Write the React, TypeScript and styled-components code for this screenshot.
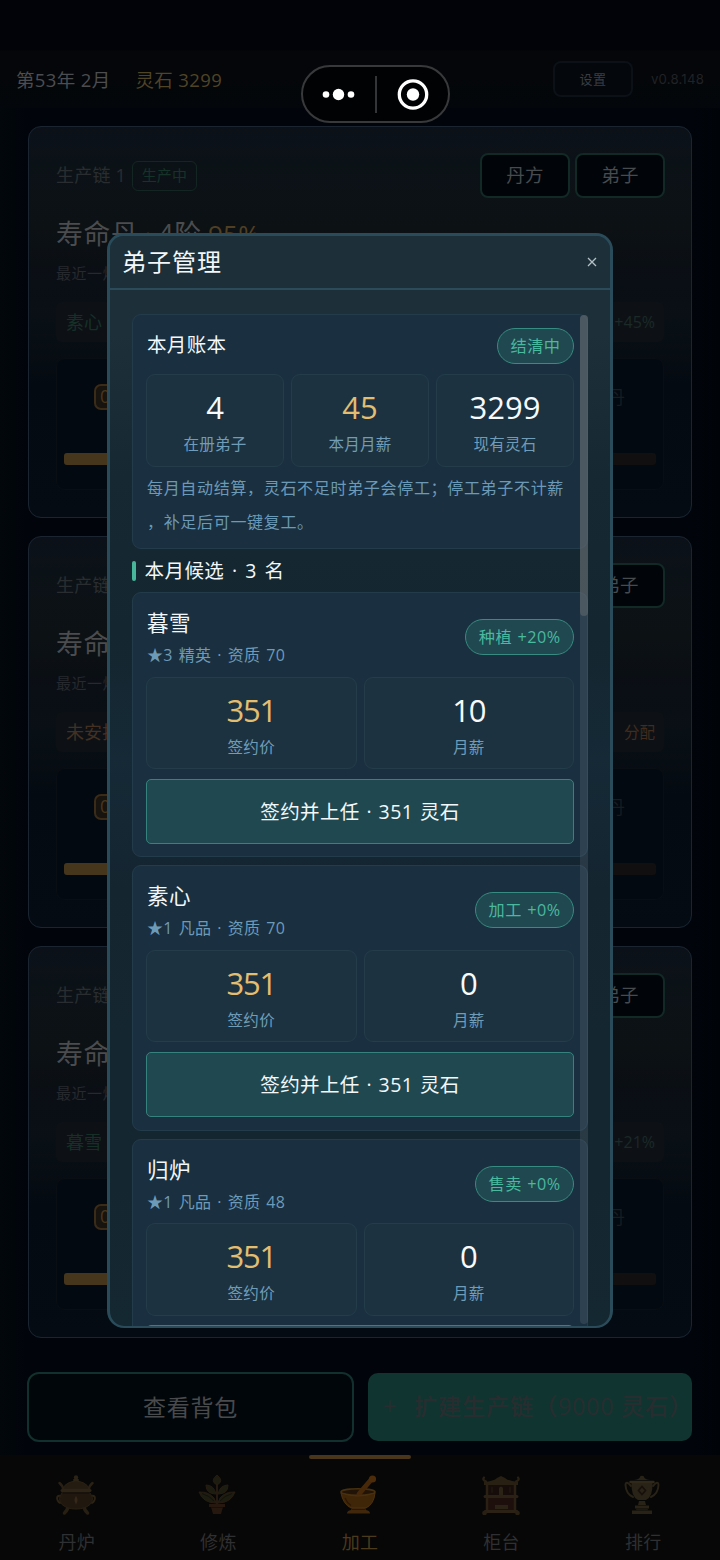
import React from "react";
import styled, { createGlobalStyle } from "styled-components";

const Global = createGlobalStyle`
  * { box-sizing: border-box; }
  html, body { margin: 0; padding: 0; background: #01050a; }
  body { font-family: "Open Sans", "Noto Sans CJK SC", sans-serif; font-weight: 400; }
  button { font: inherit; letter-spacing: inherit; padding: 0; margin: 0; }
`;

const Page = styled.div`
  position: relative;
  width: 720px;
  height: 1560px;
  overflow: hidden;
  display: flex;
  flex-direction: column;
  background: linear-gradient(90deg, #02070b 0, #01050b 28px, #01050b 692px, #000308 100%);
`;

const TopBar = styled.header`
  flex: none;
  height: 108px;
  padding: 51px 16px 0;
  display: flex;
  align-items: center;
  background: linear-gradient(180deg, #020308 0, #020308 50px, #050609 51px, #03060a 108px);
  color: #4b4d50;
  font-size: 18.5px;
  line-height: 57px;
  letter-spacing: 0.35px;
`;

const Stones = styled.span`
  margin-left: 25px;
  color: #4f4426;
`;

const Settings = styled.button`
  margin: -1px 18px 0 auto;
  width: 80px;
  height: 36px;
  border: 2px solid #0c1117;
  border-radius: 8px;
  background: #04070c;
  color: #3a3e44;
  font-size: 13px;
  line-height: 30px;
`;

const Version = styled.span`
  font-family: Inter, sans-serif;
  font-size: 13.2px;
  letter-spacing: 0.2px;
  color: #202225;
`;

const Capsule = styled.div`
  position: absolute;
  left: 301px;
  top: 65px;
  width: 149px;
  height: 58px;
  border: 2px solid #38393b;
  border-radius: 30px;
  background: #010204;
  display: flex;
  align-items: center;
  justify-content: space-between;
  padding: 0 19px 0 19px;
  z-index: 3;
`;

const CapsuleRule = styled.i`
  width: 2px;
  height: 37px;
  margin-left: 0;
  background: #343538;
`;

const Chains = styled.main`
  padding: 17.5px 28px 0;
  display: flex;
  flex-direction: column;
  gap: 18px;
`;

const ChainCard = styled.section`
  height: 392px;
  padding: 26.5px 26px 0 27px;
  border: 1px solid #1a2531;
  border-radius: 13px;
  background: linear-gradient(180deg, #0c1119 0, #0b1217 9%, #0c1114 26%, #0a0e15 40%, #091015 50%, #040a11 66%, #050b13 100%);
`;

const ChainHead = styled.div`
  height: 45px;
  display: flex;
  align-items: center;
  gap: 5px;
  color: #292d30;
  font-size: 18px;
  line-height: 22px;
  letter-spacing: 0.2px;
`;

const ChainName = styled.span`
  margin-top: -2px;
`;

const StateTag = styled.span`
  height: 30px;
  width: 65px;
  margin-left: 1px;
  border: 1px solid #132622;
  border-radius: 6px;
  color: #153329;
  font-size: 15px;
  line-height: 27px;
  text-align: center;
`;

const ChainTools = styled.div`
  margin-left: auto;
  display: flex;
  gap: 5px;
`;

const ChainButton = styled.button`
  width: 90px;
  height: 45px;
  border: 2px solid #122926;
  border-radius: 8px;
  background: #01050a;
  color: #484b4e;
  font-size: 18.5px;
  padding-bottom: 1px;
`;

const ChainTitle = styled.h2`
  margin: 13px 0 0;
  height: 44px;
  line-height: 45px;
  font-size: 26.8px;
  font-weight: 400;
  letter-spacing: 0.7px;
  word-spacing: -1.6px;
  color: #4a4c4e;
  white-space: pre;
`;

const Rate = styled.span`
  font-size: 26px;
  letter-spacing: 0.3px;
  color: #513f23;
`;

const Recent = styled.div`
  height: 22px;
  margin-top: 8px;
  line-height: 21px;
  font-size: 15px;
  letter-spacing: 0.5px;
  color: #26292d;
`;

const WorkerRow = styled.div<{ $idle?: boolean }>`
  height: 40px;
  margin: 17px 1px 0 0;
  padding: 0 9px 1px 10px;
  border-radius: 6px;
  background: #0d1115;
  display: flex;
  justify-content: space-between;
  align-items: center;
  font-size: 18px;
  line-height: 38px;
  color: ${(p) => (p.$idle ? "#443022" : "#163028")};
`;

const Bonus = styled.span<{ $idle?: boolean }>`
  font-size: ${(p) => (p.$idle ? 15.5 : 16)}px;
  color: ${(p) => (p.$idle ? "#432b1d" : "#1b2927")};
`;

const Process = styled.div`
  height: 132px;
  margin: 16px 1px 0 0;
  padding: 22.5px 7px 0;
  border: 1px solid #080e13;
  border-radius: 9px;
  background: #030910;
`;

const ProcessLabels = styled.div`
  height: 30px;
  padding: 0 31px 0 30px;
  display: flex;
  align-items: center;
  justify-content: space-between;
  font-size: 18px;
  line-height: 28px;
  color: #171c20;
`;

const Count = styled.span`
  height: 26px;
  padding: 0 4px;
  border: 2px solid #3b2c17;
  border-radius: 7px;
  background: #17130f;
  color: #49381c;
  line-height: 21px;
`;

const Track = styled.div`
  height: 12px;
  margin-top: 41px;
  border-radius: 3px;
  background: #120f11;
`;

const Fill = styled.div`
  width: 45%;
  height: 100%;
  border-radius: 3px;
  background: #46361c;
`;

const Actions = styled.div`
  padding: 34px 28px 0 27px;
  display: flex;
  gap: 14px;
  height: 103px;
`;

const BagButton = styled.button`
  width: 327px;
  height: 70px;
  border: 2px solid #12302d;
  border-radius: 12px;
  background: #01060b;
  color: #484a4c;
  font-size: 23px;
  letter-spacing: 0.8px;
  padding-bottom: 2px;
`;

const ExpandButton = styled.button`
  flex: 1;
  min-width: 0;
  height: 68px;
  margin-top: 1px;
  padding: 0 0 3px 15px;
  border: 0;
  border-radius: 10px;
  background: #103531;
  color: #282d2f;
  font-size: 23.2px;
  font-weight: 500;
  letter-spacing: 0.8px;
  text-align: left;
  white-space: pre;
  overflow: hidden;
`;

const Plus = styled.span`
  margin-right: 17px;
`;

const Nav = styled.nav`
  margin-top: auto;
  height: 105px;
  display: grid;
  grid-template-columns: repeat(5, 1fr);
  padding: 0 6px;
  background: #070707;
`;

const NavItem = styled.div<{ $on?: boolean }>`
  display: flex;
  flex-direction: column;
  align-items: center;
  color: ${(p) => (p.$on ? "#4b3a1b" : "#2f3031")};
  font-size: 18px;
  line-height: 26px;
  letter-spacing: 0.3px;
  &::before {
    content: "";
    width: 102px;
    height: 4px;
    border-radius: 2px;
    background: ${(p) => (p.$on ? "#493519" : "transparent")};
  }
  svg { margin: 16px 2px 14px 0; display: block; }
`;

const Dialog = styled.div`
  position: absolute;
  left: 107px;
  top: 233px;
  width: 506px;
  height: 1095px;
  border: 3px solid #294b5a;
  border-bottom-width: 2px;
  border-radius: 17px;
  overflow: hidden;
  display: flex;
  flex-direction: column;
  background: linear-gradient(180deg, #1d2f39 0, #1d2f38 9%, #162831 22%, #14262f 36%, #152936 48%, #142530 60%, #142831 100%);
  z-index: 4;
`;

const DialogHead = styled.div`
  flex: none;
  height: 54px;
  padding: 0 10px 0 12px;
  border-bottom: 2px solid #2b4b5b;
  display: flex;
  align-items: center;
  justify-content: space-between;
  background: #1d303a;
  color: #f3f7f9;
  font-size: 24px;
  letter-spacing: 1px;
  line-height: 50px;
`;

const Close = styled.button`
  width: 16px;
  height: 16px;
  border: 0;
  background: none;
  display: grid;
  place-items: center;
`;

const DialogBody = styled.div`
  position: relative;
  flex: 1;
  min-height: 0;
  overflow: hidden;
  padding: 24px 22px 0 22px;
`;

const ScrollTrack = styled.div`
  position: absolute;
  right: 22.5px;
  top: 25px;
  bottom: 2px;
  width: 7.5px;
  border-radius: 4px;
  background: rgba(150, 160, 175, 0.16);
`;

const Thumb = styled.div`
  height: 301px;
  border-radius: 4px;
  background: rgba(105, 110, 114, 0.5);
`;

const Panel = styled.section<{ $h: number }>`
  height: ${(p) => p.$h}px;
  padding: 13px;
  border: 1px solid #223c4c;
  border-radius: 9px;
  background: #1a2f3f;
  & + & { margin-top: 8px; }
`;

const PanelHead = styled.div<{ $h: number }>`
  height: ${(p) => p.$h}px;
  padding-left: 1px;
  display: flex;
  align-items: center;
  justify-content: space-between;
  color: #f2f7fa;
  font-size: 19.5px;
  letter-spacing: 0.35px;
`;

const Ledger = styled.span`
  line-height: 30px;
  padding-bottom: 2px;
`;

const Pill = styled.span`
  height: 36px;
  padding: 0 12.5px 0 13px;
  border: 1px solid #378b80;
  border-radius: 18px;
  background: #204850;
  color: #49b99f;
  font-size: 16.2px;
  letter-spacing: 0.45px;
  word-spacing: 0.8px;
  line-height: 35px;
  white-space: pre;
`;

const Stats = styled.div<{ $cols: number; $top: number }>`
  margin-top: ${(p) => p.$top}px;
  display: grid;
  grid-template-columns: repeat(${(p) => p.$cols}, 1fr);
  gap: 7px;
`;

const Stat = styled.div`
  height: 92.5px;
  padding-top: 9px;
  border: 1px solid #233d4b;
  border-radius: 9px;
  background: #1c3240;
  text-align: center;
`;

const Value = styled.div<{ $gold?: boolean; $tight?: boolean }>`
  height: 46px;
  line-height: 46px;
  font-size: 31px;
  letter-spacing: ${(p) => (p.$tight ? -1.3 : 0)}px;
  color: ${(p) => (p.$gold ? "#e3bd70" : "#f8fafb")};
`;

const Label = styled.div`
  height: 26px;
  line-height: 28px;
  font-size: 15.5px;
  letter-spacing: 0.3px;
  color: #6f9db9;
`;

const Note = styled.p`
  margin: 4px 0 0 1px;
  line-height: 34px;
  font-size: 16px;
  letter-spacing: 0.68px;
  white-space: nowrap;
  color: #6b9ab8;
`;

const Section = styled.h3`
  height: 43px;
  margin: 0;
  display: flex;
  align-items: center;
  gap: 8.5px;
  color: #f2f7fa;
  font-size: 19.5px;
  line-height: 26px;
  font-weight: 400;
  letter-spacing: 0.45px;
  word-spacing: 2.2px;
  &::before {
    content: "";
    width: 4px;
    height: 20px;
    border-radius: 2px;
    background: #48b69a;
  }
`;

const Name = styled.div`
  height: 32px;
  line-height: 36px;
  font-size: 21.5px;
  letter-spacing: 0.4px;
`;

const Grade = styled.div`
  height: 32px;
  line-height: 36px;
  font-size: 16px;
  letter-spacing: 0.3px;
  word-spacing: 1.5px;
  color: #6c9bba;
`;

const Sign = styled.button`
  display: block;
  width: 100%;
  height: 65px;
  margin-top: 9.5px;
  border: 1px solid #36827f;
  border-radius: 5px;
  background: #204850;
  color: #f2f7fa;
  font-size: 19.5px;
  letter-spacing: 0.4px;
  word-spacing: 1.2px;
  line-height: 63px;
`;

const chains = [
  { id: 1, title: "寿命丹 · 4阶 ", rate: "95%", state: "生产中", tools: ["丹方", "弟子"], worker: "素心", bonus: "+45%", idle: false },
  { id: 2, title: "寿命丹", tools: ["弟子"], worker: "未安排", bonus: "分配", idle: true },
  { id: 3, title: "寿命丹", tools: ["弟子"], worker: "暮雪", bonus: "+21%", idle: false },
];

const candidates = [
  { name: "暮雪", grade: "★3 精英 · 资质 70", skill: "种植 +20%", wage: "10" },
  { name: "素心", grade: "★1 凡品 · 资质 70", skill: "加工 +0%", wage: "0" },
  { name: "归炉", grade: "★1 凡品 · 资质 48", skill: "售卖 +0%", wage: "0" },
];

const Cauldron = () => (
  <svg width="40" height="40" viewBox="0 0 40 40" fill="none" strokeLinecap="round" strokeLinejoin="round">
    <path d="M12 31Q12 35 8.500 38M28 31Q28 35 31.500 38" stroke="#281f13" strokeWidth="3.500" />
    <path d="M5 21Q0 20 1.500 25Q3 29 6 27M35 21Q40 20 38.500 25Q37 29 34 27" stroke="#2c2315" strokeWidth="2" />
    <path d="M7 14Q7 11 3.500 8M33 14Q33 11 36.500 8" stroke="#2a2115" strokeWidth="2.500" />
    <path d="M6 18H34Q39 24 34 29.500Q29 34 20 34Q11 34 6 29.500Q1 24 6 18Z" fill="#20180f" stroke="#291f13" />
    <path d="M7 13Q10 7 20 6Q30 7 33 13Z" fill="#251c11" stroke="#2c2215" />
    <path d="M6 15.500H34" stroke="#2d2416" strokeWidth="3" />
    <path d="M7 18.500H33" stroke="#15110b" strokeWidth="1" />
    <circle cx="20" cy="2.500" r="2.200" fill="#2c2416" />
    <path d="M18 5H22" stroke="#2c2416" strokeWidth="2" />
    <path d="M20 21Q17 25 20 29.500Q23 25 20 21Z" fill="#352818" />
  </svg>
);

const Herb = () => (
  <svg width="40" height="40" viewBox="0 0 40 40" fill="#1d1c11" strokeLinejoin="round">
    <path d="M20 29V8" stroke="#2c2014" strokeWidth="1.600" />
    <path d="M20 10Q12.500 6 20 0Q27.500 6 20 10ZM19 19Q9 19 9 10Q17 10 19 19ZM21 19Q31 19 31 10Q23 10 21 19ZM19 28Q6 28 2 17Q9 16.500 13 19.500Q18 22 19 28ZM21 28Q34 28 38 17Q31 16.500 27 19.500Q22 22 21 28Z" stroke="#261c12" />
    <path d="M5 18.500Q13 21 17 26M35 18.500Q27 21 23 26" fill="none" stroke="#12110b" />
    <path d="M12 29H28V32H26L24 39H16L14 32H12Z" fill="#27180f" />
    <path d="M14 32.500H26" stroke="#160f0b" />
  </svg>
);

const Mortar = () => (
  <svg width="40" height="40" viewBox="0 0 40 40" strokeLinejoin="round">
    <ellipse cx="19" cy="17" rx="17" ry="3.200" fill="#211307" stroke="#463010" strokeWidth="1.600" />
    <path d="M20 19L31 6" stroke="#472909" strokeWidth="5" strokeLinecap="round" />
    <circle cx="33.500" cy="4" r="3.600" fill="#4d2c0a" />
    <path d="M2 18Q19 24 36 18Q35 29 27 33H12Q4 29 2 18Z" fill="#402608" stroke="#4b320e" />
    <path d="M13 33H26L27 35Q31 35.500 31 38.500H8Q8 35.500 12 35Z" fill="#41280c" />
    <path d="M6 23Q8 28 12 30.500M13 34.500H26" fill="none" stroke="#2b1705" strokeWidth="1.200" />
  </svg>
);

const Counter = () => (
  <svg width="40" height="40" viewBox="0 0 40 40" fill="none" strokeLinecap="round">
    <path d="M6 8H34V37H6Z" fill="#160c09" />
    <path d="M6 22H34V36H6Z" fill="#1d0f0b" />
    <path d="M3 7Q13 6 16 3L20 1L24 3Q27 6 37 7V10H3Z" fill="#292014" />
    <path d="M5 6.500Q1 5 3 2.500M35 6.500Q39 5 37 2.500" stroke="#292014" strokeWidth="2.200" />
    <path d="M6 9V37M34 9V37" stroke="#2a2013" strokeWidth="2.500" />
    <path d="M4 21.500H36M4 36.500H36" stroke="#2b2114" strokeWidth="3" />
    <circle cx="3.500" cy="38" r="2.300" fill="#292014" />
    <circle cx="36.500" cy="38" r="2.300" fill="#292014" />
    <path d="M11 12.500V17M29 12.500V17" stroke="#1d150d" strokeWidth="2" />
    <path d="M18 13Q20 10 22 13V20H18ZM14 30H27V34H14Z" fill="#2c2317" />
  </svg>
);

const Trophy = () => (
  <svg width="40" height="40" viewBox="0 0 40 40" fill="#282217" strokeLinecap="round">
    <path d="M9 11Q4 5 3.500 10Q4 19 11 22M31 11Q36 5 36.500 10Q36 19 29 22" fill="none" stroke="#282217" strokeWidth="2" />
    <path d="M9.500 8H30.500Q31 22 24 25H16Q9 22 9.500 8ZM17 26H23L24 30H16ZM13 30.500H27V33.500H13ZM10 35.500H30V39H10ZM12 5Q18 4 18 1.500Q20 0 22 1.500Q22 4 28 5Z" />
    <path d="M15 34.500H25" stroke="#1d1810" strokeWidth="2" />
    <path d="M8.500 7H31.500" stroke="#302819" strokeWidth="2.500" />
    <path d="M20 11.500L23.500 15.500L20 19.500L16.500 15.500Z" fill="#282217" stroke="#170f0b" strokeWidth="1.600" />
  </svg>
);

const tabs = [
  { label: "丹炉", Icon: Cauldron },
  { label: "修炼", Icon: Herb },
  { label: "加工", Icon: Mortar, on: true },
  { label: "柜台", Icon: Counter },
  { label: "排行", Icon: Trophy },
];

export default function App() {
  return (
    <Page>
      <Global />
      <TopBar>
        <span>第53年 2月</span>
        <Stones>灵石 3299</Stones>
        <Settings>设置</Settings>
        <Version>v0.8.148</Version>
      </TopBar>
      <Capsule>
        <svg width="33" height="14" viewBox="0 0 33 14" fill="#fff">
          <circle cx="4" cy="7.500" r="3.300" />
          <circle cx="16.500" cy="7.500" r="5.700" />
          <circle cx="29" cy="7.500" r="3.300" />
        </svg>
        <CapsuleRule />
        <svg width="32" height="32" viewBox="0 0 32 32">
          <circle cx="16" cy="16.500" r="13.700" fill="none" stroke="#fff" strokeWidth="3.300" />
          <circle cx="16" cy="16.500" r="6.200" fill="#fff" />
        </svg>
      </Capsule>
      <Chains>
        {chains.map((c) => (
          <ChainCard key={c.id}>
            <ChainHead>
              <ChainName>生产链{c.state ? ` ${c.id}` : ""}</ChainName>
              {c.state && <StateTag>{c.state}</StateTag>}
              <ChainTools>
                {c.tools.map((t) => (
                  <ChainButton key={t}>{t}</ChainButton>
                ))}
              </ChainTools>
            </ChainHead>
            <ChainTitle>
              {c.title}
              {c.rate && <Rate>{c.rate}</Rate>}
            </ChainTitle>
            <Recent>最近一炉</Recent>
            <WorkerRow $idle={c.idle}>
              {c.worker}
              <Bonus $idle={c.idle}>{c.bonus}</Bonus>
            </WorkerRow>
            <Process>
              <ProcessLabels>
                <Count>0</Count>
                <span>丹</span>
              </ProcessLabels>
              <Track>
                <Fill />
              </Track>
            </Process>
          </ChainCard>
        ))}
      </Chains>
      <Actions>
        <BagButton>查看背包</BagButton>
        <ExpandButton>
          <Plus>+</Plus>扩建生产链（9000 灵石）
        </ExpandButton>
      </Actions>
      <Nav>
        {tabs.map(({ label, Icon, on }) => (
          <NavItem key={label} $on={on}>
            <Icon />
            {label}
          </NavItem>
        ))}
      </Nav>

      <Dialog>
        <DialogHead>
          弟子管理
          <Close>
            <svg width="10" height="10" viewBox="0 0 10 10" stroke="#b4c0c6" strokeWidth="1.300">
              <path d="M1 1L9 9M9 1L1 9" />
            </svg>
          </Close>
        </DialogHead>
        <DialogBody>
          <Panel $h={235}>
            <PanelHead $h={36}>
              <Ledger>本月账本</Ledger>
              <Pill>结清中</Pill>
            </PanelHead>
            <Stats $cols={3} $top={10}>
              <Stat>
                <Value>4</Value>
                <Label>在册弟子</Label>
              </Stat>
              <Stat>
                <Value $gold>45</Value>
                <Label>本月月薪</Label>
              </Stat>
              <Stat>
                <Value>3299</Value>
                <Label>现有灵石</Label>
              </Stat>
            </Stats>
            <Note>
              每月自动结算，灵石不足时弟子会停工；停工弟子不计薪
              <br />
              ，补足后可一键复工。
            </Note>
          </Panel>
          <Section>本月候选 · 3 名</Section>
          {candidates.map((c) => (
            <Panel key={c.name} $h={265.4}>
              <PanelHead $h={62}>
                <div>
                  <Name>{c.name}</Name>
                  <Grade>{c.grade}</Grade>
                </div>
                <Pill>{c.skill}</Pill>
              </PanelHead>
              <Stats $cols={2} $top={8.5}>
                <Stat>
                  <Value $gold $tight>351</Value>
                  <Label>签约价</Label>
                </Stat>
                <Stat>
                  <Value $tight={c.wage === "10"}>{c.wage}</Value>
                  <Label>月薪</Label>
                </Stat>
              </Stats>
              <Sign>签约并上任 · 351 灵石</Sign>
            </Panel>
          ))}
          <ScrollTrack>
            <Thumb />
          </ScrollTrack>
        </DialogBody>
      </Dialog>
    </Page>
  );
}
